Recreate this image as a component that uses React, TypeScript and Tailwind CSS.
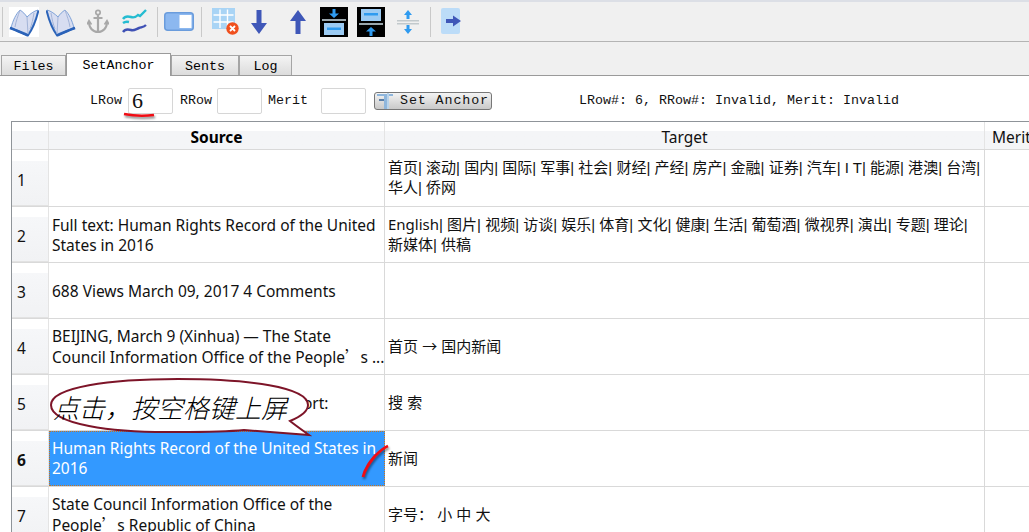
import React from "react";

const cjk = "font-['Noto_Sans','Noto_Sans_CJK_SC',sans-serif]";
const mono = "font-['Liberation_Mono','Noto_Sans_CJK_SC',monospace]";

function Sep() {
  return <div className="w-px h-[30px] bg-[#c9c9c9] shrink-0" />;
}

function Gap({ w }: { w: string }) {
  return <div className={`${w} shrink-0`} />;
}

function BookOpen({ flip }: { flip?: boolean }) {
  return (
    <svg width="30" height="30" viewBox="0 0 30 30" className={flip ? "" : "bg-white"}>
      <g transform={flip ? "translate(30,0) scale(-1,1)" : undefined}>
        <path d="M2 21 C4 13 7 7 11 3 C14 5 16 7 18 10 C21 7 25 4 29 3 C27 11 24 19 19 27 C14 25 8 23 2 21 Z" fill="#d7ddf1" stroke="#7ea2d8" strokeWidth="1" />
        <path d="M1 21 C7 23 13 26 19 28.5 C23 23 27 14 29.5 3.5" fill="none" stroke="#2a62b8" strokeWidth="1.8" />
        <path d="M1 21 C7 23 13 26 19 28.5" fill="none" stroke="#2a62b8" strokeWidth="2.6" />
        <path d="M18 10 L19 27 M11 3 C9 9 7 14 6 20 M25 6 C24 12 23 17 21 22" fill="none" stroke="#a3b4d8" strokeWidth="1" />
      </g>
    </svg>
  );
}

function Anchor() {
  return (
    <svg width="22" height="25" viewBox="0 0 22 25" fill="none" stroke="#a8a8a8" strokeWidth="2.2">
      <circle cx="11" cy="3.5" r="2.2" strokeWidth="1.7" />
      <path d="M11 6 V23 M6.5 9 H15.5" />
      <path d="M2 13 C2 19 6 23 11 23 C16 23 20 19 20 13" />
      <path d="M0 15.5 L2 11.5 L4.5 15.5 M17.5 15.5 L20 11.5 L22 15.5" strokeWidth="1.5" />
    </svg>
  );
}

function Waves() {
  return (
    <svg width="25" height="25" viewBox="0 0 25 25" fill="none" strokeWidth="2.4">
      <path d="M1 10 C3 7 6 7 9 8 C12 9 14 8 16 6 L18 7 L24 1" stroke="#25bcd1" />
      <path d="M1 14 C3 12.5 5 12.5 7 13" stroke="#25bcd1" />
      <path d="M1 23 C3 20 6 20 9 21 C12 22 14 20 17 19 C20 18 22 18 24 16" stroke="#3f51b5" />
    </svg>
  );
}

function Toggle() {
  return (
    <svg width="30" height="19" viewBox="0 0 30 19">
      <rect x="0.75" y="0.75" width="28.5" height="17.5" rx="3" fill="#8cb8f0" stroke="#6a9cdc" strokeWidth="1.5" />
      <rect x="15.5" y="3" width="12" height="13" fill="#ffffff" />
    </svg>
  );
}

function TableX() {
  return (
    <svg width="27" height="27" viewBox="0 0 27 27">
      <rect x="0" y="0" width="23" height="21" fill="#a9d4f5" />
      <path d="M1.5 7 H21.5 M1.5 14 H21.5 M8 1.5 V20 M15.5 1.5 V20" stroke="#ffffff" strokeWidth="1.4" />
      <circle cx="20.5" cy="20.5" r="6.2" fill="#f0501e" />
      <path d="M18 18 L23 23 M23 18 L18 23" stroke="#ffffff" strokeWidth="1.8" />
    </svg>
  );
}

function ArrowV({ up }: { up?: boolean }) {
  return (
    <svg width="16" height="24" viewBox="0 0 16 24" className={up ? "rotate-180" : ""}>
      <path d="M5.5 0 H10.5 V13 H16 L8 24 L0 13 H5.5 Z" fill="#3f57b8" />
    </svg>
  );
}

function MergeDown() {
  return (
    <svg width="28" height="30" viewBox="0 0 28 30" className="bg-black">
      <path d="M12.5 2 H15.5 V6.5 H19 L14 11 L9 6.5 H12.5 Z" fill="#2f9bf0" />
      <rect x="2" y="12" width="24" height="2" fill="#9aa7ad" />
      <rect x="4" y="16" width="20" height="12" fill="#9ccbf3" />
      <rect x="7" y="20.5" width="14" height="2.5" fill="#2f9bf0" />
    </svg>
  );
}

function MergeUp() {
  return (
    <svg width="28" height="30" viewBox="0 0 28 30" className="bg-black">
      <rect x="4" y="2" width="20" height="12" fill="#9ccbf3" />
      <rect x="7" y="6" width="14" height="2.5" fill="#2f9bf0" />
      <rect x="2" y="16" width="24" height="2" fill="#9aa7ad" />
      <path d="M12.5 29 H15.5 V24.5 H19 L14 20 L9 24.5 H12.5 Z" fill="#2f9bf0" />
    </svg>
  );
}

function Split() {
  return (
    <svg width="22" height="26" viewBox="0 0 22 26">
      <path d="M11 1 L15 6 H12.5 V10 H9.5 V6 H7 Z" fill="#2f9bf0" />
      <rect x="0" y="11" width="22" height="1.5" fill="#c2c9cc" />
      <rect x="0" y="14" width="22" height="1.5" fill="#c2c9cc" />
      <path d="M11 25 L15 20 H12.5 V16 H9.5 V20 H7 Z" fill="#2f9bf0" />
    </svg>
  );
}

function ArrowRight() {
  return (
    <svg width="20" height="27" viewBox="0 0 20 27">
      <rect width="19" height="26" rx="2" fill="#bcdcf8" />
      <path d="M5 11 H12 V7.5 L20 13 L12 18.5 V15 H5 Z" fill="#3f57b8" />
    </svg>
  );
}

function Toolbar() {
  return (
    <div className="h-[42px] bg-[#f0f0f0] border-t-2 border-t-[#dcdfe6] border-b border-b-[#b4b4b4] flex items-center pl-[2px] shrink-0">
      <Sep />
      <Gap w="w-[6px]" />
      <BookOpen />
      <Gap w="w-[7px]" />
      <BookOpen flip />
      <Gap w="w-[11px]" />
      <Anchor />
      <Gap w="w-[13px]" />
      <Waves />
      <Gap w="w-[10px]" />
      <Sep />
      <Gap w="w-[6px]" />
      <Toggle />
      <Gap w="w-[7px]" />
      <Sep />
      <Gap w="w-[10px]" />
      <TableX />
      <Gap w="w-[12px]" />
      <ArrowV />
      <Gap w="w-[23px]" />
      <ArrowV up />
      <Gap w="w-[14px]" />
      <MergeDown />
      <Gap w="w-[9px]" />
      <MergeUp />
      <Gap w="w-[12px]" />
      <Split />
      <Gap w="w-[11px]" />
      <Sep />
      <Gap w="w-[10px]" />
      <ArrowRight />
    </div>
  );
}

function Tab({ label, w, active }: { label: string; w: string; active?: boolean }) {
  return (
    <div
      className={
        active
          ? `${w} h-[23px] pt-[1px] bg-white border border-[#9a9a9a] border-b-0 flex items-center justify-center text-[13.33px] text-black relative top-px`
          : `${w} h-[20px] pt-[2px] bg-gradient-to-b from-[#f4f4f4] to-[#dcdcdc] border border-[#a5a5a5] border-b-0 flex items-center justify-center text-[13.33px] text-black`
      }
    >
      {label}
    </div>
  );
}

function Tabs() {
  return (
    <div className={`h-[34px] bg-[#f0f0f0] border-b border-b-[#9a9a9a] flex items-end pl-px shrink-0 ${mono}`}>
      <Tab label="Files" w="w-[65px]" />
      <Tab label="SetAnchor" w="w-[105px]" active />
      <Tab label="Sents" w="w-[68px]" />
      <Tab label="Log" w="w-[53px]" />
    </div>
  );
}

function Field({ value }: { value?: string }) {
  return (
    <div className="w-[45px] h-[26px] border border-[#d6d6d6] rounded-[2px] bg-white flex items-center pl-[3px] font-['Liberation_Serif',serif] text-[22px] leading-none text-[#111]">
      {value}
    </div>
  );
}

function AnchorBar() {
  return (
    <div className={`h-[45px] pt-[5px] bg-white flex items-center text-[13.33px] text-[#111] pl-[90px] shrink-0 ${mono}`}>
      <span className="w-[38px]">LRow</span>
      <Field value="6" />
      <span className="w-[37px] ml-[7px]">RRow</span>
      <Field />
      <span className="ml-[6px] w-[53px]">Merit</span>
      <Field />
      <div className="ml-[8px] w-[118px] h-[18px] border border-[#777] rounded-[3px] bg-gradient-to-b from-[#f4f4f4] via-[#dedede] to-[#c9c9c9] flex items-center relative pl-[25px] tracking-[0.9px] whitespace-nowrap">
        <svg width="18" height="20" viewBox="0 0 18 20" className="absolute left-[1px] top-[-3px]">
          <path d="M1 4 H17 V6 H11 V19 H8 V6 H1 Z" fill="#8fb6dc" />
          <path d="M3 9 H8 V11 H3 Z" fill="#5a7fa8" />
          <path d="M11 3 H13 V19 H11 Z" fill="#b9d3ea" />
        </svg>
        Set Anchor
      </div>
      <span className="ml-[87px] whitespace-nowrap">LRow#: 6, RRow#: Invalid, Merit: Invalid</span>
    </div>
  );
}

/* The typographic apostrophe in the reference is drawn full-width by the CJK font. */
function Q() {
  return <span className="font-['Noto_Sans_CJK_SC',sans-serif]">’</span>;
}

const En = ({ children }: { children: React.ReactNode }) => (
  <span className="font-['Noto_Sans',sans-serif] text-[15px]">{children}</span>
);

const Arrow = () => <span className="font-['Noto_Sans_CJK_SC',sans-serif]">→</span>;

const rows: { n: string; s: React.ReactNode; t: React.ReactNode; sel?: boolean; h: string; pad?: string }[] = [
  { n: "1", h: "h-[57px]", s: "", t: <>首页| 滚动| 国内| 国际| 军事| 社会| 财经| 产经| 房产| 金融| 证券| 汽车| I T| 能源| 港澳| 台湾| 华人| 侨网</> },
  { n: "2", h: "h-[56px]", s: "Full text: Human Rights Record of the United States in 2016", t: <><En>English</En>| 图片| 视频| 访谈| 娱乐| 体育| 文化| 健康| 生活| 葡萄酒| 微视界| 演出| 专题| 理论| 新媒体| 供稿</> },
  { n: "3", h: "h-[56px]", s: "688 Views March 09, 2017 4 Comments", t: "" },
  { n: "4", h: "h-[56px]", s: <span className="whitespace-nowrap">BEIJING, March 9 (Xinhua) — The State<br />Council Information Office of the People<Q />s ...</span>, t: <>首页 <Arrow /> 国内新闻</> },
  { n: "5", h: "h-[56px]", s: "Report:", t: "搜 索", pad: "pl-[226px]" },
  { n: "6", h: "h-[56px]", s: "Human Rights Record of the United States in 2016", t: "新闻", sel: true },
  { n: "7", h: "h-[56px]", s: <>State Council Information Office of the People<Q />s Republic of China</>, t: "字号： 小 中 大" },
];

function Row({ r }: { r: (typeof rows)[number] }) {
  return (
    <div className={`grid grid-cols-[37px_336px_600px_1fr] ${r.h} border-b border-b-[#d9d9d9] shrink-0`}>
      <div className={`flex flex-col justify-end border-r border-r-[#e4e4e4] ${r.sel ? "font-bold" : ""}`}>
        <div className="h-[45px] bg-gradient-to-b from-[#f6f7f9] to-[#f1f2f4] flex items-center pl-[5px] pb-[5px] border-b border-b-[#e2e2e2]">
          {r.n}
        </div>
      </div>
      <div
        className={
          r.sel
            ? "flex items-center pl-[2px] pr-[2px] pb-[1px] bg-[#3399ff] text-white border border-dotted border-[#c8741e] leading-[20px]"
            : `flex items-center ${r.pad ?? "pl-[3px]"} pr-[3px] border-r border-r-[#d9d9d9] leading-[20px]`
        }
      >
        <span>{r.s}</span>
      </div>
      <div className="flex items-center pl-[3px] border-r border-r-[#d9d9d9] leading-[20px] text-[15px] break-keep font-['Liberation_Sans','Noto_Sans_CJK_SC',sans-serif]">
        <span>{r.t}</span>
      </div>
      <div />
    </div>
  );
}

function Grid() {
  const head = "flex items-end border-r border-r-[#e4e4e4] bg-gradient-to-b from-white from-[33%] to-[#f4f5f7] to-[33%]";
  return (
    <div className={`relative ml-[11px] flex-1 overflow-hidden border-l border-t border-[#8f9499] bg-white text-[15.5px] text-[#111] ${cjk}`}>
      <div className="grid grid-cols-[37px_336px_600px_1fr] h-[28px] border-b border-b-[#d9d9d9]">
        <div className={head} />
        <div className={`${head} justify-center font-bold text-black`}>Source</div>
        <div className={`${head} justify-center`}>Target</div>
        <div className="flex items-end pl-[7px] bg-gradient-to-b from-white from-[33%] to-[#f4f5f7] to-[33%] whitespace-nowrap overflow-hidden">Merit</div>
      </div>
      {rows.map((r) => (
        <Row key={r.n} r={r} />
      ))}
      <div className="absolute left-[38px] top-[256px] w-[262px] h-[60px]">
        <svg width="262" height="60" viewBox="0 0 262 60" className="absolute left-0 top-0">
          <path
            d="M128 1 C60 1 1 9 1 27 C1 46 60 55 128 54 C152 54 175 54 194 52 L259 57 C252 52 245 47 240 43 C252 38 258 33 258 27 C258 9 198 1 128 1 Z"
            fill="#ffffff"
            stroke="#7d1428"
            strokeWidth="2"
          />
        </svg>
        <span className="absolute left-[3px] top-[13px] text-[26px] leading-[32px] italic font-light text-black whitespace-nowrap font-['Noto_Sans_CJK_SC',sans-serif]">点击，按空格键上屏</span>
      </div>
    </div>
  );
}

export default function App() {
  return (
    <div className="relative w-[1029px] h-[532px] overflow-hidden bg-white flex flex-col">
      <Toolbar />
      <Tabs />
      <AnchorBar />
      <Grid />
      <svg width="1029" height="532" className="absolute left-0 top-0 pointer-events-none drop-shadow-[1px_2px_1px_rgba(0,0,0,0.45)]">
        <path d="M124 114 C134 116 146 116 154 115" fill="none" stroke="#f00c14" strokeWidth="2.6" />
        <path d="M363 477 C365 468 370 462 375 456 C379 452 383 448 388 446" fill="none" stroke="#f00c14" strokeWidth="2.8" />
      </svg>
    </div>
  );
}
